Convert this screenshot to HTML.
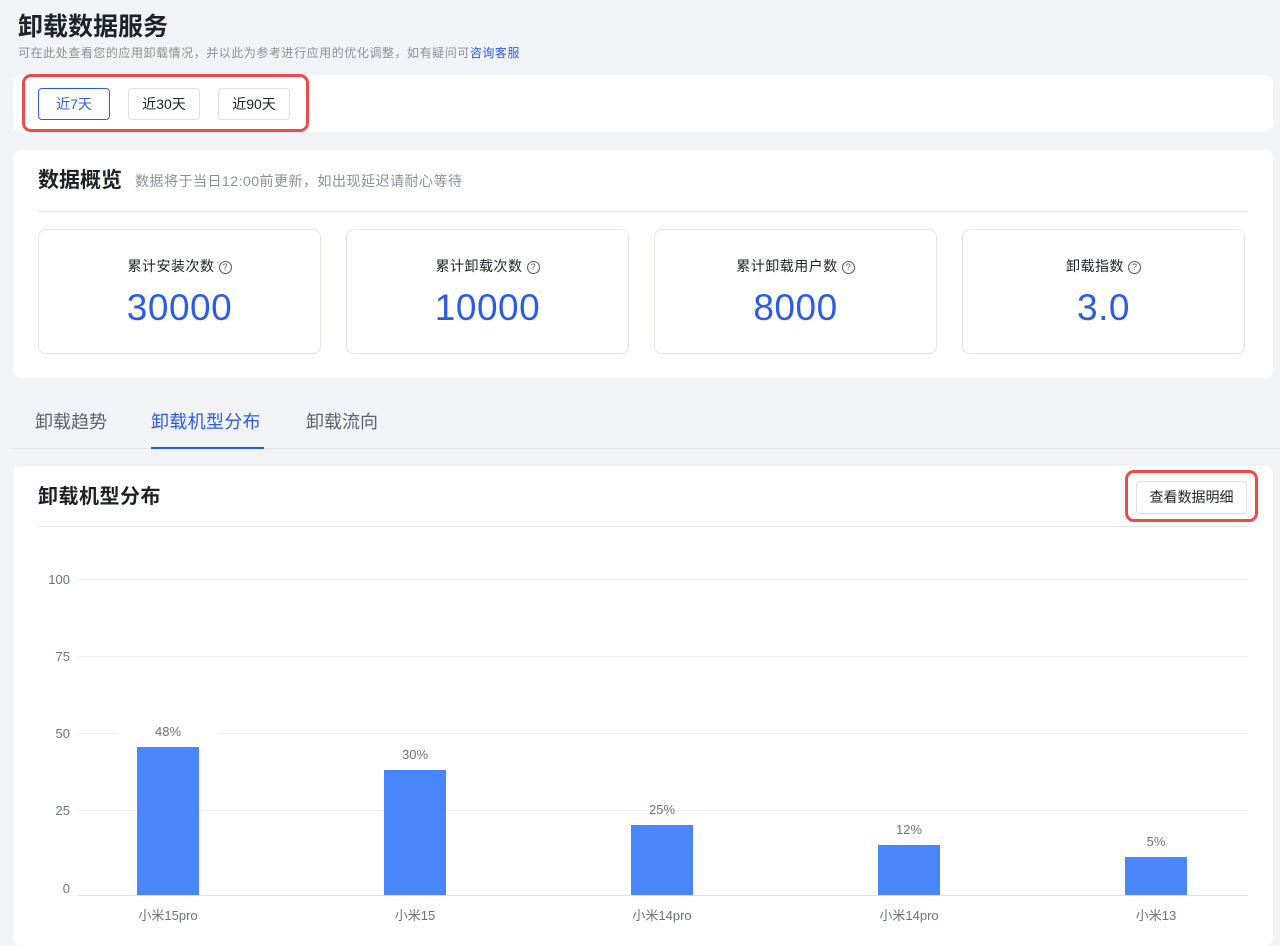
<!DOCTYPE html>
<html><head><meta charset="utf-8"><style>
*{margin:0;padding:0;box-sizing:border-box}
body{width:1280px;height:934px;overflow:hidden;background:#f2f3f7;font-family:"Liberation Sans","Noto Sans CJK SC",sans-serif;position:relative;color:#1d2129}
.a{position:absolute}
.card{position:absolute;background:#fff;border-radius:8px;left:13px;width:1260px}
.btn{position:absolute;top:88px;height:32px;width:72px;border:1px solid #dcdfe6;border-radius:4px;font-size:14px;line-height:30px;text-align:center;color:#1d2129;background:#fff}
.stat{position:absolute;top:229px;width:283px;height:125px;border:1px solid #e3e5ea;border-radius:8px;text-align:center}
.stat .l{margin-top:26px;font-size:14px;color:#1d2129;line-height:20px;letter-spacing:0.5px}
.stat .n{margin-top:11px;font-size:37px;color:#2b5ce6;line-height:42px;font-weight:500;letter-spacing:0.5px}
.q{display:inline-block;width:13px;height:13px;border:1px solid #555;border-radius:50%;font-size:9px;line-height:11px;vertical-align:1px;margin-left:4px;color:#555;letter-spacing:0}
.grid{position:absolute;left:78px;width:1170px;height:1px;background:#eeeff2}
.yl{position:absolute;width:40px;left:30px;text-align:right;font-size:12px;color:#6b7280}
.pl{position:absolute;width:100px;text-align:center;font-size:12px;color:#6b7280}
.xl{position:absolute;top:905px;width:120px;text-align:center;font-size:12px;color:#6b7280}
</style></head><body>
<div class="a" style="left:18px;top:11px;font-size:25px;font-weight:bold;line-height:32px">卸载数据服务</div>
<div class="a" style="left:18px;top:45px;font-size:12px;color:#8a8f99;line-height:17px;letter-spacing:0.55px">可在此处查看您的应用卸载情况，并以此为参考进行应用的优化调整，如有疑问可<span style="color:#2b5ce6">咨询客服</span></div>

<div class="card" style="top:75px;height:57px"></div>
<div class="btn" style="left:38px;border-color:#2b5ce6;color:#2b5ce6">近7天</div>
<div class="btn" style="left:128px">近30天</div>
<div class="btn" style="left:218px">近90天</div>
<div class="a" style="left:22px;top:74px;width:287px;height:58px;border:3px solid #f04a45;border-radius:9px"></div>

<div class="card" style="top:150px;height:228px"></div>
<div class="a" style="left:38px;top:167px;font-size:21px;font-weight:bold;line-height:28px">数据概览</div>
<div class="a" style="left:135px;top:171px;font-size:14px;color:#8a8f99;line-height:20px;letter-spacing:0.5px">数据将于当日12:00前更新，如出现延迟请耐心等待</div>
<div class="a" style="left:38px;top:211px;width:1210px;height:1px;background:#e8e9ed"></div>
<div class="stat" style="left:38px"><div class="l">累计安装次数<span class="q">?</span></div><div class="n">30000</div></div>
<div class="stat" style="left:346px"><div class="l">累计卸载次数<span class="q">?</span></div><div class="n">10000</div></div>
<div class="stat" style="left:654px"><div class="l">累计卸载用户数<span class="q">?</span></div><div class="n">8000</div></div>
<div class="stat" style="left:962px"><div class="l">卸载指数<span class="q">?</span></div><div class="n">3.0</div></div>

<div class="a" style="left:35px;top:410px;font-size:18px;color:#5c6270;line-height:24px">卸载趋势</div>
<div class="a" style="left:151px;top:410px;font-size:18px;color:#2b5ce6;line-height:24px;letter-spacing:0.3px">卸载机型分布</div>
<div class="a" style="left:306px;top:410px;font-size:18px;color:#5c6270;line-height:24px">卸载流向</div>
<div class="a" style="left:13px;top:448px;width:1267px;height:1px;background:#e3e5ea"></div>
<div class="a" style="left:151px;top:447px;width:113px;height:2px;background:#2b5ce6"></div>

<div class="card" style="top:466px;height:480px"></div>
<div class="a" style="left:38px;top:484px;font-size:20px;font-weight:bold;line-height:26px;letter-spacing:0.5px">卸载机型分布</div>
<div class="a" style="left:1136px;top:481px;width:111px;height:33px;border:1px solid #dcdfe6;border-radius:4px;font-size:14px;line-height:31px;text-align:center;background:#fff">查看数据明细</div>
<div class="a" style="left:1125px;top:470px;width:133px;height:52px;border:3px solid #f04a45;border-radius:9px"></div>
<div class="a" style="left:38px;top:526px;width:1210px;height:1px;background:#e8e9ed"></div>

<div class="grid" style="top:579px"></div>
<div class="grid" style="top:656px"></div>
<div class="grid" style="top:733px"></div>
<div class="grid" style="top:810px"></div>
<div class="grid" style="top:895px;background:#dfe1e6"></div>
<div class="yl" style="top:572px;font-size:13px">100</div>
<div class="yl" style="top:649px;font-size:13px">75</div>
<div class="yl" style="top:726px;font-size:13px">50</div>
<div class="yl" style="top:803px;font-size:13px">25</div>
<div class="yl" style="top:881px;font-size:13px">0</div>

<div class="a" style="left:137px;top:747px;width:62px;height:148px;background:#4a86fb"></div>
<div class="a" style="left:384px;top:770px;width:62px;height:125px;background:#4a86fb"></div>
<div class="a" style="left:631px;top:825px;width:62px;height:70px;background:#4a86fb"></div>
<div class="a" style="left:878px;top:845px;width:62px;height:50px;background:#4a86fb"></div>
<div class="a" style="left:1125px;top:857px;width:62px;height:38px;background:#4a86fb"></div>
<div class="pl" style="left:118px;top:724px;background:#fff;font-size:13px">48%</div>
<div class="pl" style="left:365px;top:747px;font-size:13px">30%</div>
<div class="pl" style="left:612px;top:802px;font-size:13px">25%</div>
<div class="pl" style="left:859px;top:822px;font-size:13px">12%</div>
<div class="pl" style="left:1106px;top:834px;font-size:13px">5%</div>
<div class="xl" style="left:108px;font-size:13px">小米15pro</div>
<div class="xl" style="left:355px;font-size:13px">小米15</div>
<div class="xl" style="left:602px;font-size:13px">小米14pro</div>
<div class="xl" style="left:849px;font-size:13px">小米14pro</div>
<div class="xl" style="left:1096px;font-size:13px">小米13</div>
</body></html>
